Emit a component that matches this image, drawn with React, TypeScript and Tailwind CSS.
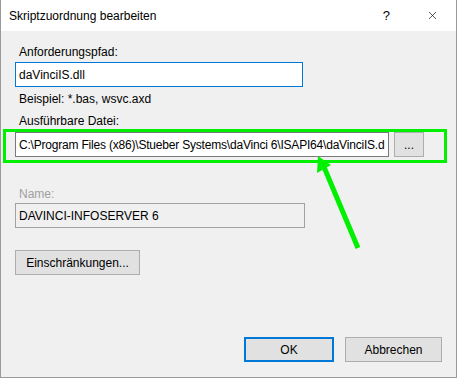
import { X } from 'lucide-react'

const font = "font-['Segoe_UI','Liberation_Sans',sans-serif]"

function Label({ children, disabled, className = '' }: { children: string; disabled?: boolean; className?: string }) {
  return (
    <div className={`h-4 pl-[4px] text-[12px] leading-4 ${disabled ? 'text-[#a0a0a0]' : 'text-black'} ${className}`}>
      {children}
    </div>
  )
}

function Field({
  value,
  width,
  focused,
  disabled,
  className = '',
}: {
  value: string
  width: string
  focused?: boolean
  disabled?: boolean
  className?: string
}) {
  return (
    <div
      className={`flex h-[25px] items-center overflow-hidden border pl-[3px] text-[12px] whitespace-nowrap text-black ${width} ${
        focused ? 'border-[#0078d7] bg-white' : disabled ? 'border-[#a0a0a0] bg-[#f0f0f0]' : 'border-[#7a7a7a] bg-white'
      } ${className}`}
    >
      {value}
    </div>
  )
}

function Btn({ children, primary, className = '' }: { children: string; primary?: boolean; className?: string }) {
  return (
    <div
      className={`flex h-[25px] items-center justify-center bg-[#e1e1e1] text-[12px] text-black ${
        primary ? 'border-2 border-[#0078d7]' : 'border border-[#adadad]'
      } ${className}`}
    >
      {children}
    </div>
  )
}

export default function App() {
  return (
    <div className={`flex h-[378px] w-[457px] flex-col border-x border-b border-[#9a9a9a] bg-[#f0f0f0] ${font}`}>
      <div className="flex h-[31px] shrink-0 items-center bg-white pl-[8px]">
        <span className="text-[12px] text-black">Skriptzuordnung bearbeiten</span>
        <span className="ml-auto text-[13px] text-black">?</span>
        <X className="mr-[17px] ml-[36px] h-[13px] w-[13px] text-black" strokeWidth={1.2} />
      </div>

      <div className="relative flex flex-1 flex-col pl-[14px]">
        <Label className="mt-[13px]">Anforderungspfad:</Label>
        <Field value="daVinciIS.dll" width="w-[288px]" focused className="mt-[2px]" />
        <Label className="mt-[4px]">Beispiel: *.bas, wsvc.axd</Label>
        <Label className="mt-[6px]">Ausführbare Datei:</Label>
        <div className="mt-[3px] flex items-center">
          <Field
            value={'C:\\Program Files (x86)\\Stueber Systems\\daVinci 6\\ISAPI64\\daVinciIS.d'}
            width="w-[374px] tracking-[-0.2px]"
          />
          <Btn className="ml-[5px] w-[30px]">...</Btn>
        </div>
        <Label disabled className="mt-[29px]">Name:</Label>
        <Field value="DAVINCI-INFOSERVER 6" width="w-[290px]" disabled className="mt-[1px]" />
        <Btn className="mt-[22px] w-[125px]">Einschränkungen...</Btn>

        <div className="mt-auto mb-[15px] flex justify-end gap-[11px] pr-[14px]">
          <Btn primary className="w-[90px]">OK</Btn>
          <Btn className="w-[97px]">Abbrechen</Btn>
        </div>

        {/* annotation overlay */}
        <div className="pointer-events-none absolute top-[98px] left-[2px] h-[34px] w-[444px] border-[3px] border-[#00f000]" />
        <svg className="pointer-events-none absolute top-0 left-0" width="456" height="347" viewBox="0 31 456 347">
          <line x1="357" y1="248" x2="323" y2="167" stroke="#00f000" strokeWidth="5" />
          <polygon points="317,156 316,173 330,165" fill="#00f000" />
        </svg>
      </div>
    </div>
  )
}
